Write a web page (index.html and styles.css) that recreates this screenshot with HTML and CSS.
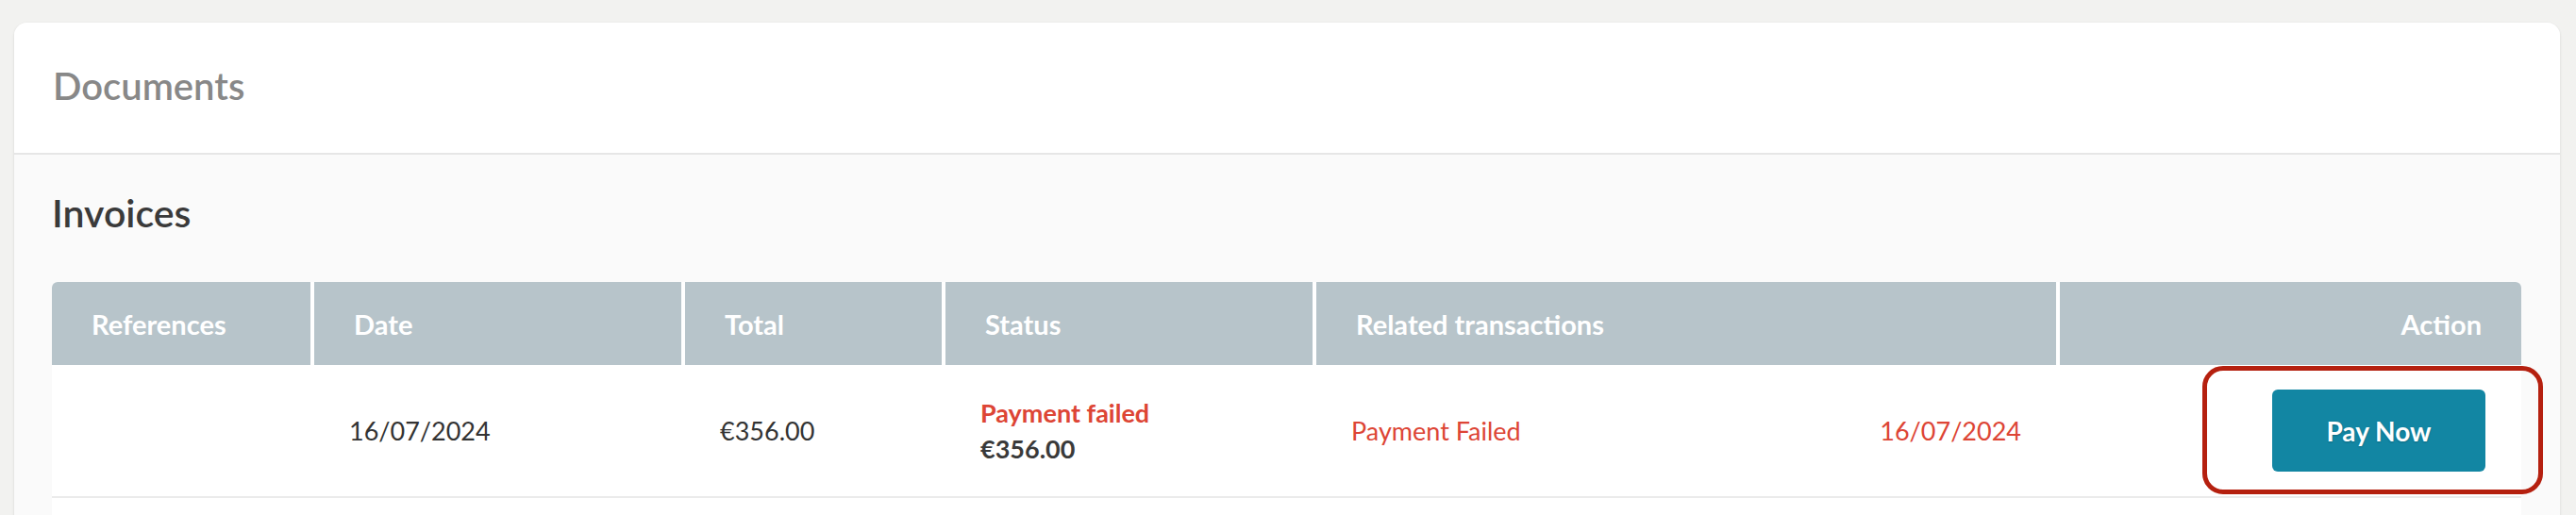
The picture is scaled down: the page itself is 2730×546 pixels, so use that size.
FILE: index.html
```html
<!DOCTYPE html>
<html lang="en">
<head>
    <meta charset="UTF-8">
    <meta name="viewport" content="width=device-width, initial-scale=1.0">
    <title>Documents</title>
    <link rel="stylesheet" href="styles.css">
</head>
<body>
    <div class="card">
        <div class="card-header">
            <h1>Documents</h1>
        </div>
        <div class="card-body">
            <h2>Invoices</h2>
            <div class="invoices">
                <div class="thead">
                    <div class="th">References</div>
                    <div class="th">Date</div>
                    <div class="th">Total</div>
                    <div class="th">Status</div>
                    <div class="th">Related transactions</div>
                    <div class="th th-right">Action</div>
                </div>
                <div class="row">
                    <div class="td"></div>
                    <div class="td">16/07/2024</div>
                    <div class="td">€356.00</div>
                    <div class="td status">
                        <span class="failed">Payment failed</span>
                        <span class="amount">€356.00</span>
                    </div>
                    <div class="td related">
                        <span>Payment Failed</span>
                        <span>16/07/2024</span>
                    </div>
                    <div class="td action">
                        <button class="pay-btn">Pay Now</button>
                        <span class="highlight"></span>
                    </div>
                </div>
                <div class="row row-empty"></div>
            </div>
        </div>
    </div>
</body>
</html>
```

FILE: styles.css
```css
body {
    margin: 0;
    background-color: #f2f2f0;
    font-family: Lato, "Open Sans", sans-serif;
    color: #333;
    overflow: hidden;
}
.card {
    margin: 24px 17px 0 15px;
    background-color: #fafafa;
    border-radius: 14px;
    box-shadow: 0 1px 3px rgba(0, 0, 0, 0.12);
    overflow: hidden;
}
.card-header {
    background-color: #fff;
    padding: 43px 41px 47px;
    border-bottom: 2px solid #e6e6e6;
}
.card-header h1 {
    margin: 0;
    font-size: 40px;
    line-height: 48px;
    font-weight: 600;
    color: #888;
}
.card-body {
    padding: 38px 41px 0 40px;
}
.card-body h2 {
    margin: 0 0 49px;
    font-size: 41px;
    line-height: 48px;
    font-weight: 600;
    color: #3a3a3a;
}
.thead,
.row {
    display: grid;
    grid-template-columns: 274px 389px 272px 389px 784px 489px;
    column-gap: 4px;
}
.thead {
    height: 88px;
    background-color: #fff;
    border-radius: 6px 6px 0 0;
    overflow: hidden;
}
.th {
    display: flex;
    align-items: center;
    padding: 0 42px;
    background-color: #b7c4ca;
    color: #fff;
    font-size: 29px;
    font-weight: 700;
}
.th-right {
    justify-content: flex-end;
}
.row {
    height: 139px;
    background-color: #fff;
    border-bottom: 2px solid #ebebeb;
}
.row-empty {
    height: 60px;
    border-bottom: none;
}
.td {
    display: flex;
    align-items: center;
    padding: 0 37px;
    font-size: 27px;
}
.status {
    flex-direction: column;
    align-items: flex-start;
    justify-content: center;
    font-weight: 700;
    line-height: 38px;
}
.failed {
    color: #dd4535;
}
.amount {
    color: #3a3a3a;
}
.related {
    justify-content: space-between;
    color: #dd4535;
}
.action {
    position: relative;
    justify-content: flex-end;
    padding-right: 38px;
}
.pay-btn {
    width: 226px;
    height: 87px;
    border: none;
    border-radius: 6px;
    background-color: #1286a3;
    color: #fff;
    font-family: inherit;
    font-size: 28px;
    font-weight: 700;
    text-shadow: 0 1px 2px rgba(0, 0, 0, 0.2);
    cursor: pointer;
}
.highlight {
    position: absolute;
    top: 1px;
    right: -23px;
    width: 351px;
    height: 126px;
    border: 5px solid #b5200f;
    border-radius: 22px;
    pointer-events: none;
}
```
